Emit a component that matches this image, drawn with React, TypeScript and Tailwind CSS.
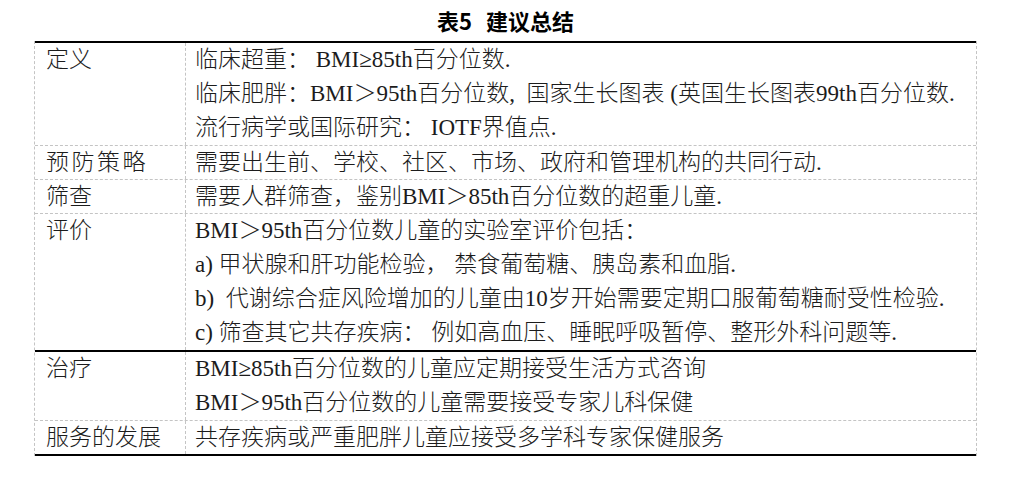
type Row = {
  label: string;
  lines: string[];
  after: "dashed" | "solid";
  labelClass?: string;
};

const rows: Row[] = [
  {
    label: "定义",
    lines: [
      "临床超重： BMI≥85th百分位数.",
      "临床肥胖：BMI＞95th百分位数,  国家生长图表 (英国生长图表99th百分位数.",
      "流行病学或国际研究： IOTF界值点.",
    ],
    after: "dashed",
  },
  {
    label: "预防策略",
    lines: ["需要出生前、学校、社区、市场、政府和管理机构的共同行动."],
    after: "dashed",
    labelClass: "tracking-[2.5px]",
  },
  {
    label: "筛查",
    lines: ["需要人群筛查，鉴别BMI＞85th百分位数的超重儿童."],
    after: "dashed",
  },
  {
    label: "评价",
    lines: [
      "BMI＞95th百分位数儿童的实验室评价包括：",
      "a) 甲状腺和肝功能检验， 禁食葡萄糖、胰岛素和血脂.",
      "b)  代谢综合症风险增加的儿童由10岁开始需要定期口服葡萄糖耐受性检验.",
      "c) 筛查其它共存疾病： 例如高血压、睡眠呼吸暂停、整形外科问题等.",
    ],
    after: "solid",
  },
  {
    label: "治疗",
    lines: ["BMI≥85th百分位数的儿童应定期接受生活方式咨询", "BMI＞95th百分位数的儿童需要接受专家儿科保健"],
    after: "dashed",
  },
  {
    label: "服务的发展",
    lines: ["共存疾病或严重肥胖儿童应接受多学科专家保健服务"],
    after: "solid",
  },
];

const App = () => {
  return (
    <div className="w-[1020px] h-[482px] bg-white text-[#1c1c1c] font-['Liberation_Serif','Noto_Sans_CJK_SC',serif]">
      <div className="ml-[34px] w-[943px] h-[41px] flex items-center justify-center gap-[14px] font-['Noto_Sans_CJK_SC',sans-serif] font-bold text-[22px] text-black">
        <span>表5</span>
        <span>建议总结</span>
      </div>

      <div className="ml-[34px] w-[943px] border-x border-dashed border-[#c4c4c4]">
        <div className="h-[2px] bg-black" />
        {rows.map((row, i) => (
          <div key={row.label}>
            <div
              className={`grid grid-cols-[151px_1fr] text-[23px] font-light ${
                row.lines.length > 1 ? "leading-[34px]" : "leading-[33px]"
              }`}
            >
              <div className={`pl-[11px] border-r border-dashed border-[#c4c4c4] ${row.labelClass ?? ""}`}>
                {row.label}
              </div>
              <div className="pl-[9px] whitespace-pre">
                {row.lines.map((line) => (
                  <div key={line}>{line}</div>
                ))}
              </div>
            </div>
            {row.after === "solid" ? (
              <div className="h-[2px] bg-black" />
            ) : (
              i < rows.length - 1 && <div className="border-t border-dashed border-[#c4c4c4]" />
            )}
          </div>
        ))}
      </div>
    </div>
  );
};

export default App;
